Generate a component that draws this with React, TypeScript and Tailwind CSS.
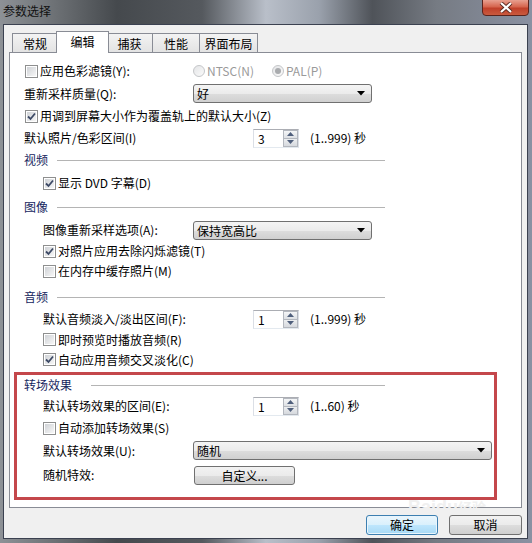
import React from 'react';

function Check({ checked }: { checked?: boolean }) {
  return (
    <span className="flex h-[13px] w-[13px] shrink-0 items-center justify-center border border-[#8e8f8f] bg-white p-px">
      <span className="flex h-full w-full items-center justify-center bg-[linear-gradient(135deg,#cfd2d6,#f7f7f7)]">
        {checked && (
          <svg width="9" height="9" viewBox="0 0 9 9">
            <path d="M1 4.5 L3.5 7 L8 1.5" fill="none" stroke="#3d4a66" strokeWidth="1.8" />
          </svg>
        )}
      </span>
    </span>
  );
}

function Radio({ on }: { on?: boolean }) {
  return (
    <span className="flex h-[12px] w-[12px] shrink-0 items-center justify-center rounded-full border border-[#c4c6c9] bg-[linear-gradient(135deg,#e4e5e7,#fafafa)]">
      {on && <span className="h-[6px] w-[6px] rounded-full bg-[#a9abae]" />}
    </span>
  );
}

function Select({ value, width }: { value: string; width: string }) {
  return (
    <div
      className={`flex h-[19px] ${width} items-center justify-between rounded-[3px] border border-[#707070] bg-[linear-gradient(180deg,#f4f4f4_0%,#ebebeb_50%,#dddddd_51%,#d0d0d0_100%)] pl-[3px] pr-[6px]`}
    >
      <span className="leading-[17px]">{value}</span>
      <svg width="8" height="5" viewBox="0 0 8 5">
        <path d="M0 0 H8 L4 4.5 Z" fill="#000" />
      </svg>
    </div>
  );
}

function Spin({ value }: { value: string }) {
  return (
    <div className="flex h-[19px] w-[46px] border border-[#abadb3] border-l-[#dbdfe6] border-r-[#dbdfe6] border-b-[#e3e9ef] bg-white">
      <span className="flex-1 pl-[4px] leading-[17px]">{value}</span>
      <div className="flex w-[15px] flex-col border border-[#b3b7be] bg-[#e9ebee]">
        <div className="flex flex-1 items-center justify-center border-b border-[#b3b7be] bg-[linear-gradient(180deg,#f5f6f7,#dde0e4)]">
          <svg width="7" height="4" viewBox="0 0 7 4">
            <path d="M0 4 L3.5 0 L7 4 Z" fill="#4f5f7c" />
          </svg>
        </div>
        <div className="flex flex-1 items-center justify-center bg-[linear-gradient(180deg,#eceef0,#d6d9de)]">
          <svg width="7" height="4" viewBox="0 0 7 4">
            <path d="M0 0 L7 0 L3.5 4 Z" fill="#4f5f7c" />
          </svg>
        </div>
      </div>
    </div>
  );
}

function Header({ label, gap, className = '' }: { label: string; gap: string; className?: string }) {
  return (
    <div className={`flex w-[361px] items-center ${className}`}>
      <span className="text-[#16265e]">{label}</span>
      <div className={`h-px flex-1 bg-[#b4b4b4] ${gap}`} />
    </div>
  );
}

export default function App() {
  return (
    <div className="relative h-[543px] w-[532px] overflow-hidden bg-[linear-gradient(90deg,#8d9196_0%,#6e7276_10%,#45494d_22%,#55595e_38%,#b9bfc9_50%,#9aa1ac_60%,#4f5359_70%,#767b83_82%,#8a91a2_100%)] font-['Noto_Sans_CJK_SC',sans-serif] text-[12px] text-black">
      {/* Title bar */}
      <div className="flex h-[24px] items-center pl-[3px] pb-[3px] text-[12px] text-[#111]">参数选择</div>
      <div className="absolute right-[3px] top-[-1px] flex h-[17px] w-[47px] items-center justify-center rounded-b-[4px] border border-[#5a231c] bg-[linear-gradient(180deg,#e8a090_0%,#d6654e_45%,#c0402a_55%,#c95a3e_100%)]">
        <svg width="14" height="11" viewBox="0 0 14 11">
          <path d="M2 1 L12 10 M12 1 L2 10" stroke="#5a2a22" strokeWidth="4" />
          <path d="M2 1 L12 10 M12 1 L2 10" stroke="#fff" strokeWidth="2.2" />
        </svg>
      </div>

      {/* Client area */}
      <div className="ml-[3px] flex h-[515px] w-[525px] flex-col border border-[#3b4150] bg-[#f0f0f0]">
        {/* Tabs */}
        <div className="mx-[5px] mt-[6px] flex h-[21px] items-end pl-[3px]">
          <div className="flex h-[19px] w-[46px] items-center justify-center border border-b-0 border-[#898c95] bg-[linear-gradient(180deg,#f3f3f3,#e3e3e3)] pt-[1px]">常规</div>
          <div className="relative z-10 -mx-[2px] -mb-px flex h-[22px] w-[53px] items-start justify-center border border-b-0 border-[#898c95] bg-white pt-[1px]">编辑</div>
          <div className="flex h-[19px] w-[46px] items-center justify-center border border-b-0 border-l-0 border-[#898c95] bg-[linear-gradient(180deg,#f3f3f3,#e3e3e3)] pt-[1px]">捕获</div>
          <div className="flex h-[19px] w-[47px] items-center justify-center border border-b-0 border-l-0 border-[#898c95] bg-[linear-gradient(180deg,#f3f3f3,#e3e3e3)] pt-[1px]">性能</div>
          <div className="flex h-[19px] w-[58px] items-center justify-center border border-b-0 border-l-0 border-[#898c95] bg-[linear-gradient(180deg,#f3f3f3,#e3e3e3)] pt-[1px]">界面布局</div>
        </div>

        {/* Panel */}
        <div className="relative mx-[5px] flex h-[456px] flex-col border border-[#898c95] bg-white pt-[7px]">
          <div className="flex flex-col pl-[14px]">
            <div className="flex h-[22px] items-center">
              <div className="flex w-[169px] items-center gap-[2px] pl-px">
                <Check />
                <span>应用色彩滤镜(Y):</span>
              </div>
              <div className="flex items-center gap-[2px] text-[#9a9a9a]">
                <Radio />
                <span className="mr-[16px]">NTSC(N)</span>
                <Radio on />
                <span>PAL(P)</span>
              </div>
            </div>
            <div className="flex h-[23px] items-center">
              <span className="w-[169px]">重新采样质量(Q):</span>
              <Select value="好" width="w-[179px]" />
            </div>
            <div className="flex h-[22px] items-center gap-[2px] pl-px">
              <Check checked />
              <span>用调到屏幕大小作为覆盖轨上的默认大小(Z)</span>
            </div>
            <div className="flex h-[22px] items-center">
              <span className="w-[229px]">默认照片/色彩区间(I)</span>
              <Spin value="3" />
              <span className="ml-[11px]">(1..999) 秒</span>
            </div>

            <Header label="视频" gap="ml-[9px]" className="h-[22px]" />
            <div className="flex h-[24px] items-center gap-[2px] pl-[19px]">
              <Check checked />
              <span>显示 DVD 字幕(D)</span>
            </div>

            <Header label="图像" gap="ml-[9px]" className="h-[24px]" />
            <div className="flex h-[22px] items-center pl-[19px]">
              <span className="w-[150px]">图像重新采样选项(A):</span>
              <Select value="保持宽高比" width="w-[179px]" />
            </div>
            <div className="flex h-[20px] items-center gap-[2px] pl-[19px]">
              <Check checked />
              <span>对照片应用去除闪烁滤镜(T)</span>
            </div>
            <div className="flex h-[20px] items-center gap-[2px] pl-[19px]">
              <Check />
              <span>在内存中缓存照片(M)</span>
            </div>

            <Header label="音频" gap="ml-[9px]" className="mt-[4px] h-[24px]" />
            <div className="flex h-[20px] items-center pl-[19px]">
              <span className="w-[210px]">默认音频淡入/淡出区间(F):</span>
              <Spin value="1" />
              <span className="ml-[11px]">(1..999) 秒</span>
            </div>
            <div className="flex h-[21px] items-center gap-[2px] pl-[19px]">
              <Check />
              <span>即时预览时播放音频(R)</span>
            </div>
            <div className="flex h-[19px] items-center gap-[2px] pl-[19px]">
              <Check checked />
              <span>自动应用音频交叉淡化(C)</span>
            </div>
          </div>

          {/* Highlighted transition section */}
          <div className="ml-[4px] mt-[3px] flex w-[483px] flex-col border-[3px] border-[#c4474b] pb-[9px] pl-[7px]">
            <Header label="转场效果" gap="ml-[19px]" className="h-[20px]" />
            <div className="flex h-[22px] items-center pl-[19px]">
              <span className="w-[210px]">默认转场效果的区间(E):</span>
              <Spin value="1" />
              <span className="ml-[11px]">(1..60) 秒</span>
            </div>
            <div className="flex h-[22px] items-center gap-[2px] pl-[19px]">
              <Check />
              <span>自动添加转场效果(S)</span>
            </div>
            <div className="flex h-[23px] items-center pl-[19px]">
              <span className="w-[150px]">默认转场效果(U):</span>
              <Select value="随机" width="w-[299px]" />
            </div>
            <div className="flex h-[26px] items-center pl-[19px]">
              <span className="w-[151px]">随机特效:</span>
              <button className="h-[19px] w-[101px] rounded-[3px] border border-[#707070] bg-[linear-gradient(180deg,#f2f2f2_0%,#ebebeb_50%,#dddddd_51%,#cfcfcf_100%)] leading-[17px]">
                自定义...
              </button>
            </div>
          </div>
        </div>

        {/* Dialog buttons */}
        <div className="mx-[5px] mt-[7px] flex justify-end gap-[11px]">
          <button className="h-[20px] w-[72px] rounded-[3px] border border-[#3c7fb1] bg-[linear-gradient(180deg,#eaf6fd_0%,#d9f0fc_50%,#bee6fd_51%,#a7d9f5_100%)] leading-[18px] shadow-[inset_0_0_0_1px_#e9f5fc]">
            确定
          </button>
          <button className="h-[20px] w-[73px] rounded-[3px] border border-[#707070] bg-[linear-gradient(180deg,#f2f2f2_0%,#ebebeb_50%,#dddddd_51%,#cfcfcf_100%)] leading-[18px]">
            取消
          </button>
        </div>
      </div>

      {/* Faint watermark */}
      <div className="pointer-events-none absolute left-[408px] top-[498px] font-['Liberation_Sans',sans-serif] text-[18px] font-bold leading-none text-[#f0f0f0]">
        Baidu<span className="font-['Noto_Sans_CJK_SC',sans-serif] text-[14px]">经验</span>
      </div>
    </div>
  );
}
